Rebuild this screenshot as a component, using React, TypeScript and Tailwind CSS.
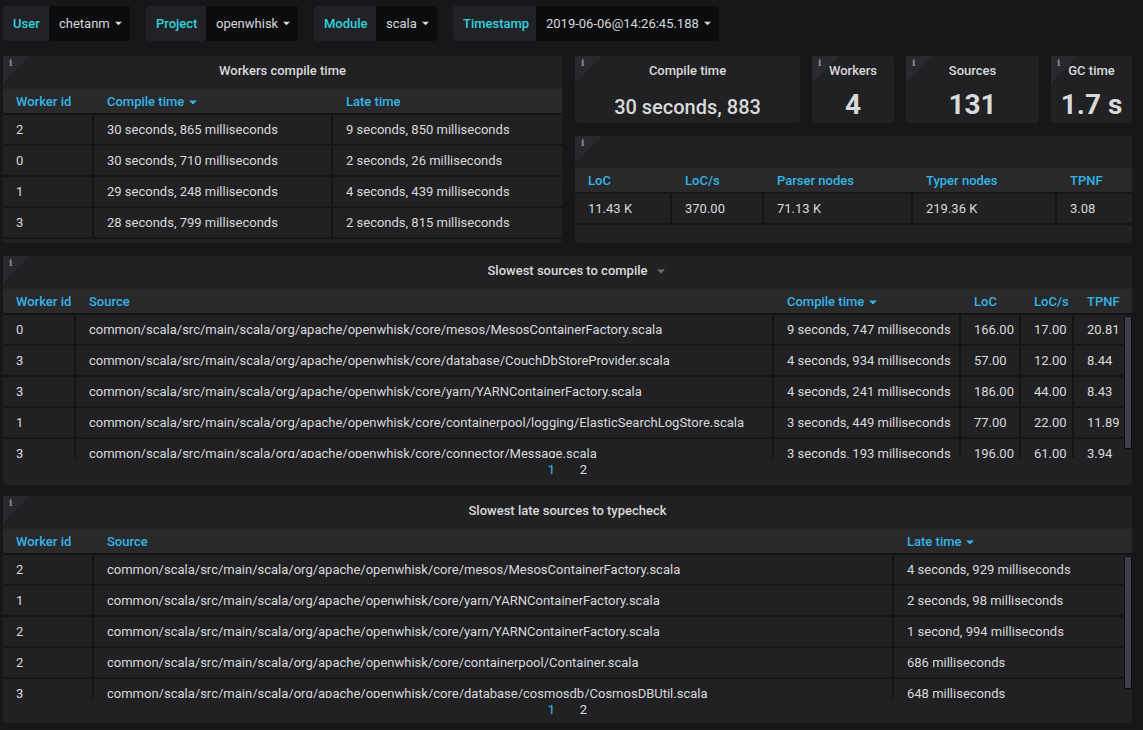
import React from "react";

type Col = { label: string; sort?: boolean };

const PATH = "common/scala/src/main/scala/org/apache/openwhisk/core/";

function Caret({ color, w = 8 }: { color: string; w?: number }) {
  return (
    <svg width={w} height={5} viewBox="0 0 8 5" className="block">
      <polygon points="0,0.5 8,0.5 4,4.5" fill={color} />
    </svg>
  );
}

function InfoCorner() {
  return (
    <div className="absolute left-0 top-0 h-[27px] w-[27px]">
      <svg width="27" height="27" className="absolute left-0 top-0">
        <polygon points="0,0 27,0 0,27" fill="#2a2a2e" />
      </svg>
      <span className="absolute left-[6px] top-[1px] font-['DejaVu_Serif',serif] text-[9px] font-bold leading-[12px] text-[#8e8f92]">
        i
      </span>
    </div>
  );
}

function Variable({ label, value, lw, vw }: { label: string; value: string; lw: string; vw: string }) {
  return (
    <div className="flex h-[35px] overflow-hidden rounded-[3px] text-[13px]">
      <div className={`${lw} flex items-center bg-[#202226] pl-[10px] font-medium text-[#32d1df]`}>{label}</div>
      <div className={`${vw} flex items-center bg-[#0b0c0e] pl-[10px] text-[#d8d9da]`}>
        {value}
        <span className="ml-[5px]">
          <Caret color="#d8d9da" w={7} />
        </span>
      </div>
    </div>
  );
}

function Panel({
  title,
  titleCaret,
  titleH,
  className,
  children,
}: {
  title?: string;
  titleCaret?: boolean;
  titleH: string;
  className: string;
  children?: React.ReactNode;
}) {
  return (
    <div className={`relative overflow-hidden rounded-[3px] bg-[#212124] ${className}`}>
      <InfoCorner />
      <div className={`${titleH} pt-[7px] text-center text-[13px] font-medium leading-[16px] text-[#d8d9da]`}>
        {title && (
          <span className="relative">
            {title}
            {titleCaret && (
              <span className="absolute -right-[17px] top-[6px]">
                <Caret color="#6e6f73" />
              </span>
            )}
          </span>
        )}
      </div>
      {children}
    </div>
  );
}

function Table({
  grid,
  cols,
  rows,
  padRight = "",
  bodyH = "",
  scroll = false,
  pages = false,
}: {
  grid: string;
  cols: Col[];
  rows: string[][];
  padRight?: string;
  bodyH?: string;
  scroll?: boolean;
  pages?: boolean;
}) {
  return (
    <div className="text-[13px] leading-[16px]">
      <div className={`${grid} h-[24px] items-center bg-[#29292c] pt-[2px] ${padRight}`}>
        {cols.map((c) => (
          <div key={c.label} className="flex items-center pl-[13px] font-medium text-[#33b5e5]">
            {c.label}
            {c.sort && (
              <span className="ml-[5px]">
                <Caret color="#33b5e5" />
              </span>
            )}
          </div>
        ))}
      </div>
      <div className={`relative overflow-hidden ${bodyH} ${scroll ? "" : "border-b-2 border-[#141517]"}`}>
        {rows.map((r, i) => (
          <div key={i} className={`${grid} border-t-2 border-[#141517] ${padRight}`}>
            {r.map((v, j) => (
              <div
                key={j}
                className="flex h-[29px] items-center overflow-hidden whitespace-nowrap border-r-2 border-[#141517] pl-[13px] text-[#d8d9da] last:border-r-0"
              >
                {v}
              </div>
            ))}
          </div>
        ))}
        {scroll && (
          <div className="absolute right-0 top-[3px] h-[133px] w-[8px] rounded-[2px] border border-[#0b0b0d] bg-[#3f4048]" />
        )}
      </div>
      {pages && (
        <div className="flex justify-center pt-[4px] text-[13px] leading-[16px]">
          <span className="w-[32px] text-center text-[#33b5e5]">1</span>
          <span className="w-[32px] text-center text-[#d8d9da]">2</span>
        </div>
      )}
    </div>
  );
}

function Stat({ title, value, className, big }: { title: string; value: string; className: string; big?: boolean }) {
  return (
    <Panel titleH="h-[29px]" title={title} className={className}>
      <div
        className={
          big
            ? "mt-[4px] text-center text-[28px] font-bold leading-[32px] text-[#d8d9da]"
            : "mt-[10px] text-center text-[20px] font-medium leading-[24px] text-[#d8d9da]"
        }
      >
        {value}
      </div>
    </Panel>
  );
}

export default function App() {
  return (
    <div className="h-[730px] w-[1143px] overflow-hidden bg-[#161719] px-[3px] pt-[6px] font-['Roboto','Liberation_Sans',sans-serif]">
      <div className="flex gap-[16px]">
        <Variable label="User" value="chetanm" lw="w-[46px]" vw="w-[81px]" />
        <Variable label="Project" value="openwhisk" lw="w-[60px]" vw="w-[92px]" />
        <Variable label="Module" value="scala" lw="w-[62px]" vw="w-[61px]" />
        <Variable label="Timestamp" value="2019-06-06@14:26:45.188" lw="w-[83px]" vw="w-[183px]" />
      </div>

      <div className="mt-[15px] flex h-[187px] gap-[13px]">
        <Panel title="Workers compile time" titleH="h-[33px]" className="h-[187px] w-[559px]">
          <Table
            grid="grid grid-cols-[91px_239px_1fr]"
            cols={[{ label: "Worker id" }, { label: "Compile time", sort: true }, { label: "Late time" }]}
            rows={[
              ["2", "30 seconds, 865 milliseconds", "9 seconds, 850 milliseconds"],
              ["0", "30 seconds, 710 milliseconds", "2 seconds, 26 milliseconds"],
              ["1", "29 seconds, 248 milliseconds", "4 seconds, 439 milliseconds"],
              ["3", "28 seconds, 799 milliseconds", "2 seconds, 815 milliseconds"],
            ]}
          />
        </Panel>

        <div className="flex w-[557px] flex-col gap-[13px]">
          <div className="flex h-[67px] gap-[12px]">
            <Stat title="Compile time" value="30 seconds, 883" className="h-[67px] w-[225px]" />
            <Stat title="Workers" value="4" big className="h-[67px] w-[82px]" />
            <Stat title="Sources" value="131" big className="h-[67px] w-[133px]" />
            <Stat title="GC time" value="1.7 s" big className="h-[67px] flex-1" />
          </div>
          <Panel titleH="h-[32px]" className="h-[107px]">
            <Table
              grid="grid grid-cols-[97px_92px_149px_144px_1fr]"
              cols={[
                { label: "LoC" },
                { label: "LoC/s" },
                { label: "Parser nodes" },
                { label: "Typer nodes" },
                { label: "TPNF" },
              ]}
              rows={[["11.43 K", "370.00", "71.13 K", "219.36 K", "3.08"]]}
            />
          </Panel>
        </div>
      </div>

      <Panel title="Slowest sources to compile" titleCaret titleH="h-[33px]" className="mt-[13px] h-[229px] w-[1129px]">
        <Table
          grid="grid grid-cols-[73px_698px_187px_60px_53px_1fr]"
          padRight="pr-[9px]"
          bodyH="h-[145px]"
          scroll
          pages
          cols={[
            { label: "Worker id" },
            { label: "Source" },
            { label: "Compile time", sort: true },
            { label: "LoC" },
            { label: "LoC/s" },
            { label: "TPNF" },
          ]}
          rows={[
            ["0", PATH + "mesos/MesosContainerFactory.scala", "9 seconds, 747 milliseconds", "166.00", "17.00", "20.81"],
            ["3", PATH + "database/CouchDbStoreProvider.scala", "4 seconds, 934 milliseconds", "57.00", "12.00", "8.44"],
            ["3", PATH + "yarn/YARNContainerFactory.scala", "4 seconds, 241 milliseconds", "186.00", "44.00", "8.43"],
            ["1", PATH + "containerpool/logging/ElasticSearchLogStore.scala", "3 seconds, 449 milliseconds", "77.00", "22.00", "11.89"],
            ["3", PATH + "connector/Message.scala", "3 seconds, 193 milliseconds", "196.00", "61.00", "3.94"],
          ]}
        />
      </Panel>

      <Panel title="Slowest late sources to typecheck" titleH="h-[33px]" className="mt-[11px] h-[227px] w-[1129px]">
        <Table
          grid="grid grid-cols-[91px_800px_1fr]"
          padRight="pr-[9px]"
          bodyH="h-[145px]"
          scroll
          pages
          cols={[{ label: "Worker id" }, { label: "Source" }, { label: "Late time", sort: true }]}
          rows={[
            ["2", PATH + "mesos/MesosContainerFactory.scala", "4 seconds, 929 milliseconds"],
            ["1", PATH + "yarn/YARNContainerFactory.scala", "2 seconds, 98 milliseconds"],
            ["2", PATH + "yarn/YARNContainerFactory.scala", "1 second, 994 milliseconds"],
            ["2", PATH + "containerpool/Container.scala", "686 milliseconds"],
            ["3", PATH + "database/cosmosdb/CosmosDBUtil.scala", "648 milliseconds"],
          ]}
        />
      </Panel>
    </div>
  );
}
